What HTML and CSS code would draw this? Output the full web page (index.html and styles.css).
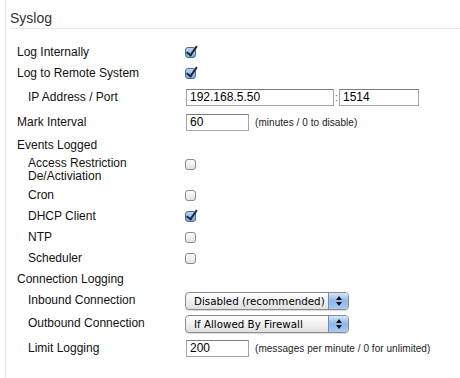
FILE: index.html
```html
<!DOCTYPE html>
<html lang="en">
<head>
    <meta charset="UTF-8">
    <title>Syslog</title>
    <link rel="stylesheet" href="styles.css">
</head>
<body>
    <div class="panel">
        <h2 class="title">Syslog</h2>
        <div class="form">
            <div class="row">
                <span class="label">Log Internally</span>
                <span class="check on"></span>
            </div>
            <div class="row">
                <span class="label">Log to Remote System</span>
                <span class="check on"></span>
            </div>
            <div class="row tall">
                <span class="label sub">IP Address / Port</span>
                <span class="field ip">192.168.5.50</span>
                <span class="colon">:</span>
                <span class="field port">1514</span>
            </div>
            <div class="row mid">
                <span class="label">Mark Interval</span>
                <span class="field short">60</span>
                <span class="hint">(minutes / 0 to disable)</span>
            </div>
            <div class="row">
                <span class="label">Events Logged</span>
            </div>
            <div class="row two">
                <span class="label sub">Access Restriction<br>De/Activiation</span>
                <span class="check"></span>
            </div>
            <div class="row">
                <span class="label sub">Cron</span>
                <span class="check"></span>
            </div>
            <div class="row">
                <span class="label sub">DHCP Client</span>
                <span class="check on"></span>
            </div>
            <div class="row">
                <span class="label sub">NTP</span>
                <span class="check"></span>
            </div>
            <div class="row">
                <span class="label sub">Scheduler</span>
                <span class="check"></span>
            </div>
            <div class="row">
                <span class="label">Connection Logging</span>
            </div>
            <div class="row">
                <span class="label sub">Inbound Connection</span>
                <span class="select"><span class="value">Disabled (recommended)</span><span class="arrows"></span></span>
            </div>
            <div class="row mid">
                <span class="label sub">Outbound Connection</span>
                <span class="select"><span class="value">If Allowed By Firewall</span><span class="arrows"></span></span>
            </div>
            <div class="row last">
                <span class="label sub">Limit Logging</span>
                <span class="field short">200</span>
                <span class="hint">(messages per minute / 0 for unlimited)</span>
            </div>
        </div>
    </div>
</body>
</html>
```

FILE: styles.css
```css
html,body{
    margin: 0;
    background: #fff;
    font-family: "Liberation Sans", Arial, sans-serif;
    font-size: 12px;
    color: #111;
}
.panel{
    margin-left: 5px;
    min-height: 378px;
    border-left: 1px solid #e6e6e6;
}
.title{
    margin: 0 0 0 4px;
    padding-top: 8px;
    height: 20px;
    line-height: 20px;
    font-size: 14px;
    font-weight: normal;
    color: #333;
    border-bottom: 1px solid #e8e8e8;
}
.form{
    padding: 13px 0 0 11px;
}
.row{
    display: flex;
    align-items: center;
    height: 21px;
}
.row.tall{ height: 26px; }
.row.mid{ height: 25px; }
.row.last{ height: 25px; }
.row.two{
    height: 29px;
    align-items: flex-start;
    padding-top: 1px;
    box-sizing: border-box;
}
.row.two .check{ margin-top: 2px; }
.label{
    width: 168px;
    flex: none;
    line-height: 13px;
}
.label.sub{
    width: 157px;
    padding-left: 11px;
}
/* checkbox aqua */
.check{
    width: 9px;
    height: 9px;
    border: 1px solid #8a8a8a;
    border-radius: 3px;
    background: linear-gradient(#fdfdfd, #e2e2e2);
    position: relative;
}
.check.on{
    border-color: #4a6c9c;
    background: linear-gradient(#bcd4f2, #7fa8dd);
}
.check.on::after{
    content: "";
    position: absolute;
    left: 2px;
    top: -4px;
    width: 4px;
    height: 10px;
    border-right: 2px solid #1d2a3a;
    border-bottom: 2px solid #1d2a3a;
    transform: rotate(35deg);
    transform-origin: 60% 60%;
}
.field{
    height: 15px;
    line-height: 15px;
    padding-left: 3px;
    border: 1px solid #a5a5a5;
    border-top-color: #7c7c7c;
    font-size: 12px;
    color: #000;
    box-sizing: content-box;
}
.field.ip{ width: 143px; margin-left: 1px; }
.field.port{ width: 75px; }
.field.short{ width: 58px; margin-left: 1px; }
.colon{
    width: 5px;
    text-align: center;
    font-size: 10px;
    color: #555;
}
.hint{
    margin-left: 6px;
    font-size: 10px;
    letter-spacing: 0.05px;
    color: #222;
}
.select{
    display: flex;
    width: 162px;
    height: 16px;
    border: 1px solid #8c8c8c;
    border-radius: 4px;
    background: linear-gradient(#ffffff, #f0f0f0 50%, #e0e0e0);
    box-shadow: 0 1px 1px rgba(0,0,0,0.15);
    overflow: hidden;
    font-family: "DejaVu Sans", sans-serif;
    font-size: 10.3px;
    white-space: nowrap;
}
.value{
    flex: 1;
    padding-left: 8px;
    line-height: 16px;
    color: #000;
}
.arrows{
    width: 19px;
    border-left: 1px solid #6a8fc4;
    background: linear-gradient(#d6e6fa, #8fb6e8 50%, #a9cbf3);
    position: relative;
}
.arrows::before,.arrows::after{
    content: "";
    position: absolute;
    left: 7px;
    border-left: 3px solid transparent;
    border-right: 3px solid transparent;
}
.arrows::before{
    top: 3px;
    border-bottom: 4px solid #111;
}
.arrows::after{
    top: 9px;
    border-top: 4px solid #111;
}
```
